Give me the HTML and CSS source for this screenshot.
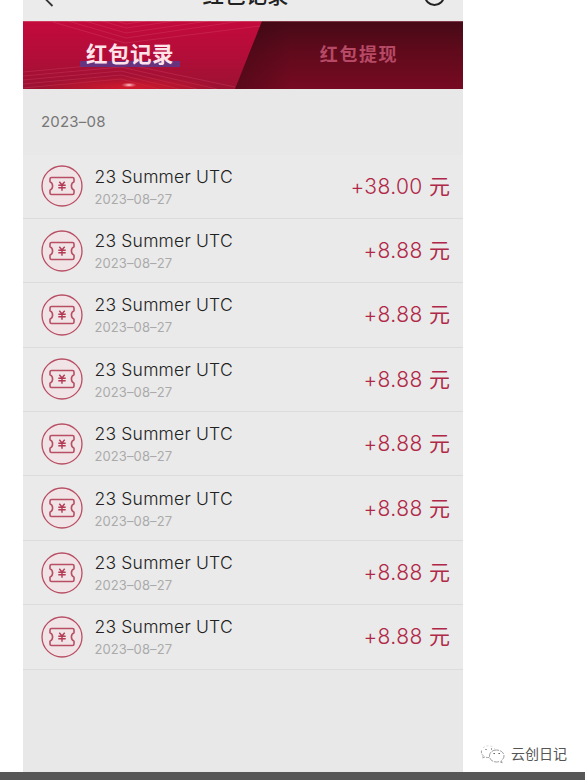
FILE: index.html
```html
<!DOCTYPE html>
<html lang="zh-CN">
<head>
    <meta charset="UTF-8">
    <meta name="viewport" content="width=device-width, initial-scale=1.0">
    <title>红包记录</title>
    <link rel="stylesheet" href="styles.css">
</head>
<body>

<svg class="sprite" width="0" height="0">
    <symbol id="ticket" viewBox="0 0 42 42">
        <circle cx="21" cy="21" r="20" fill="#f1e4e6" stroke="#b84e64" stroke-width="1.3"/>
        <path d="M10.500 12.500h21q1.500 0 1.500 1.500v2.800q-2.600 1.200-2.600 4.200t2.600 4.200V28q0 1.500-1.500 1.500h-21Q9 29.500 9 28v-2.800q2.600-1.200 2.600-4.200T9 16.800V14q0-1.500 1.500-1.500z" fill="none" stroke="#b84e64" stroke-width="1.600" stroke-linejoin="round"/>
        <path d="M18.300 16.700l2.700 3.300 2.700-3.300M17.300 20.300h7.400M17.300 22.800h7.400M21 20v5.700" fill="none" stroke="#b23a54" stroke-width="1.400"/>
    </symbol>
</svg>

<div class="phone">
    <header class="navbar">
        <svg class="back" width="12" height="16" viewBox="0 0 12 16"><path d="M9.500 1L2.500 8l7 7" fill="none" stroke="#333" stroke-width="1.800"/></svg>
        <h1 class="navbar-title">红包记录</h1>
        <span class="target"></span>
    </header>

    <nav class="tabs">
        <svg class="tabs-bg" width="440" height="68" viewBox="0 0 440 68">
            <defs>
                <linearGradient id="active" x1="0" y1="0" x2="0" y2="1">
                    <stop offset="0" stop-color="#c30a3c"/>
                    <stop offset=".5" stop-color="#b30d39"/>
                    <stop offset="1" stop-color="#9c1231"/>
                </linearGradient>
                <linearGradient id="idle" x1="0" y1="0" x2="0" y2="1">
                    <stop offset="0" stop-color="#460a16"/>
                    <stop offset=".45" stop-color="#600a1c"/>
                    <stop offset="1" stop-color="#760a22"/>
                </linearGradient>
                <linearGradient id="edge" x1="0" x2="1">
                    <stop offset="0" stop-color="#2e0710" stop-opacity=".4"/>
                    <stop offset="1" stop-color="#2e0710" stop-opacity="0"/>
                </linearGradient>
                <radialGradient id="glow">
                    <stop offset="0" stop-color="#e01d2c" stop-opacity=".8"/>
                    <stop offset="1" stop-color="#e01d2c" stop-opacity="0"/>
                </radialGradient>
                <radialGradient id="spark">
                    <stop offset="0" stop-color="#ffd9dc"/>
                    <stop offset="1" stop-color="#ff7685" stop-opacity="0"/>
                </radialGradient>
            </defs>
            <rect width="440" height="68" fill="url(#idle)"/>
            <path d="M212 0h56v68h-56z" fill="url(#edge)"/>
            <path d="M0 0h239l-27 68H0z" fill="url(#active)"/>
            <g fill="none" stroke="#e86b88" stroke-opacity=".28" stroke-width=".8">
                <path d="M30 1l72 21 135-17M45 0l58 17 115-17M62 0l41 12 82-12M79 0l24 7 48-7M94 0l9 3 20-3"/>
                <path d="M0 51l98-9 114 24M0 55l98-9 96 22M0 59l98-9 76 18M0 63l98-9 58 14M0 67l98-9 38 10"/>
            </g>
            <ellipse cx="106" cy="67" rx="90" ry="12" fill="url(#glow)"/>
            <ellipse cx="106" cy="64" rx="8" ry="2.500" fill="url(#spark)"/>
            <path d="M0 .5h440" stroke="#d98391" stroke-opacity=".4"/>
        </svg>
        <a class="tab tab-active"><span>红包记录</span></a>
        <a class="tab">红包提现</a>
    </nav>

    <div class="month">2023–08</div>

    <ul class="records">
        <li class="record">
            <svg class="icon"><use href="#ticket"/></svg>
            <div class="info">
                <div class="name">23 Summer UTC</div>
                <div class="date">2023–08–27</div>
            </div>
            <div class="amount">+38.00 <span class="unit">元</span></div>
        </li>
        <li class="record">
            <svg class="icon"><use href="#ticket"/></svg>
            <div class="info">
                <div class="name">23 Summer UTC</div>
                <div class="date">2023–08–27</div>
            </div>
            <div class="amount">+8.88 <span class="unit">元</span></div>
        </li>
        <li class="record">
            <svg class="icon"><use href="#ticket"/></svg>
            <div class="info">
                <div class="name">23 Summer UTC</div>
                <div class="date">2023–08–27</div>
            </div>
            <div class="amount">+8.88 <span class="unit">元</span></div>
        </li>
        <li class="record">
            <svg class="icon"><use href="#ticket"/></svg>
            <div class="info">
                <div class="name">23 Summer UTC</div>
                <div class="date">2023–08–27</div>
            </div>
            <div class="amount">+8.88 <span class="unit">元</span></div>
        </li>
        <li class="record">
            <svg class="icon"><use href="#ticket"/></svg>
            <div class="info">
                <div class="name">23 Summer UTC</div>
                <div class="date">2023–08–27</div>
            </div>
            <div class="amount">+8.88 <span class="unit">元</span></div>
        </li>
        <li class="record">
            <svg class="icon"><use href="#ticket"/></svg>
            <div class="info">
                <div class="name">23 Summer UTC</div>
                <div class="date">2023–08–27</div>
            </div>
            <div class="amount">+8.88 <span class="unit">元</span></div>
        </li>
        <li class="record">
            <svg class="icon"><use href="#ticket"/></svg>
            <div class="info">
                <div class="name">23 Summer UTC</div>
                <div class="date">2023–08–27</div>
            </div>
            <div class="amount">+8.88 <span class="unit">元</span></div>
        </li>
        <li class="record">
            <svg class="icon"><use href="#ticket"/></svg>
            <div class="info">
                <div class="name">23 Summer UTC</div>
                <div class="date">2023–08–27</div>
            </div>
            <div class="amount">+8.88 <span class="unit">元</span></div>
        </li>
    </ul>
</div>

<div class="watermark">
    <svg width="26" height="20" viewBox="0 0 26 20" fill="none" stroke="#888" stroke-width=".8">
        <path d="M9 13.500q-2 .3-4-.6L2.500 14l.6-2.500Q.8 9.500 1.500 6.500" stroke-dasharray="3 1"/>
        <path d="M3 4q4-3.500 9-1.500 2.300 1 3 3" stroke="#ccc" stroke-dasharray="2 2"/>
        <path d="M16.500 6c-4 0-7 2.500-7 6s3 6 7 6q1.500 0 3-.5l2.600 1.200-.7-2.200Q24 14.500 24 12c0-3.500-3.500-6-7.500-6z" stroke-dasharray="5 1"/>
        <path d="M13.500 9.500h1.300M18.500 9.500h1.300M5.500 5.500h1M11 5h1" stroke="#444" stroke-width="1.200"/>
    </svg>
    <span>云创日记</span>
</div>
<div class="bottom-bar"></div>

</body>
</html>
```

FILE: styles.css
```css
/* General styling */
* {
    box-sizing: border-box;
}

body {
    margin: 0;
    height: 780px;
    overflow: hidden;
    background: #fff;
    font-family: Inter, "Noto Sans CJK SC", sans-serif;
    color: #333;
}

.sprite {
    position: absolute;
}

.phone {
    width: 440px;
    height: 772px;
    margin-left: 23px;
    background: #e8e8e8;
}

/* Top bar, scrolled partly out of view */
.navbar {
    display: flex;
    justify-content: space-between;
    align-items: flex-end;
    height: 21px;
    padding: 0 18px 15px 20px;
    background: #ebebeb;
    overflow: hidden;
}

.back {
    flex: none;
    margin-bottom: -1px;
}

.navbar-title {
    margin: 0 0 -5px 12px;
    font-size: 21.5px;
    line-height: 32px;
    font-weight: 500;
    color: #222;
}

.target {
    width: 21px;
    height: 21px;
    border: 2.5px solid #222;
    border-radius: 50%;
}

/* Tabs */
.tabs {
    position: relative;
    display: flex;
    height: 68px;
}

.tabs-bg {
    position: absolute;
    left: 0;
    top: 0;
}

.tab {
    position: relative;
    width: 226px;
    padding: 20px 0 0 18px;
    text-align: center;
    font-size: 18px;
    line-height: 28px;
    font-weight: bold;
    letter-spacing: 1.6px;
    color: #b64a66;
}

.tab-active {
    width: 214px;
    padding: 18px 0 0;
    font-size: 21.5px;
    line-height: 30px;
    letter-spacing: 0.5px;
    color: #ffe3ea;
}

.tab-active::before {
    content: "";
    position: absolute;
    left: 57px;
    top: 40px;
    width: 100px;
    height: 6px;
    background: #5b3a8c;
    opacity: 0.85;
}

.tab-active span {
    position: relative;
}

/* Records */
.month {
    height: 65.5px;
    padding-left: 18px;
    font-size: 15px;
    line-height: 65px;
    letter-spacing: 0.2px;
    color: #777;
}

.records {
    margin: 0;
    padding: 0;
    list-style: none;
}

.record {
    display: flex;
    align-items: center;
    height: 64.4px;
    padding: 0 13px 0 18px;
    background: #eaeaea;
    border-bottom: 1px solid #dcdcdc;
}

.icon {
    width: 42px;
    height: 42px;
}

.info {
    flex: 1;
    margin-left: 11.5px;
}

.name {
    padding-top: 1px;
    font-size: 17.5px;
    line-height: 24px;
    font-weight: 300;
    letter-spacing: 0.2px;
    color: #222;
}

.date {
    font-size: 13px;
    line-height: 20px;
    letter-spacing: 0.1px;
    color: #aaa;
}

.amount {
    padding-top: 1px;
    font-size: 21px;
    line-height: 30px;
    font-weight: 300;
    letter-spacing: 0.4px;
    color: #b02847;
}

.unit {
    font-size: 21px;
    font-weight: 400;
    letter-spacing: 0;
}

/* Account mark and bottom strip */
.watermark {
    position: absolute;
    left: 480px;
    top: 744px;
    display: flex;
    align-items: center;
    gap: 5px;
    font-size: 14px;
    line-height: 20px;
    color: #555;
}

.bottom-bar {
    height: 8px;
    background: #575757;
}
```
